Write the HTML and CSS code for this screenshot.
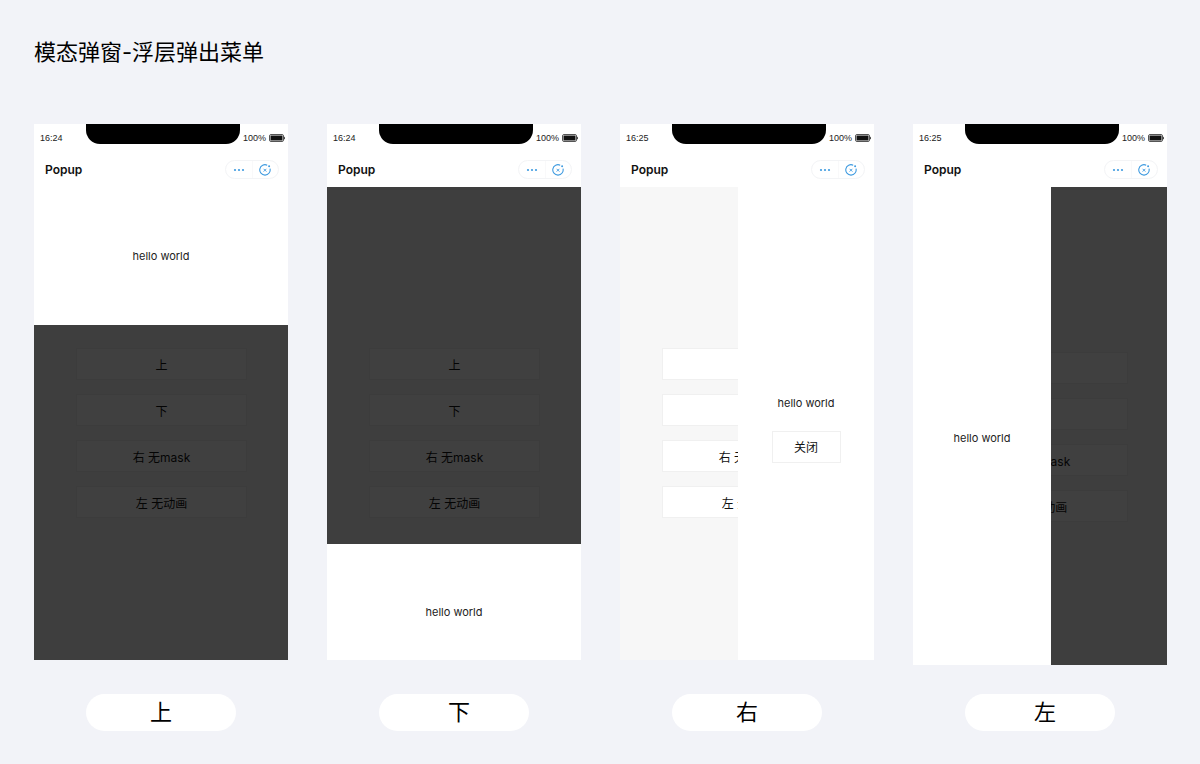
FILE: index.html
```
<!DOCTYPE html>
<html lang="zh-CN">
<head>
    <meta charset="UTF-8">
    <meta name="viewport" content="width=device-width, initial-scale=1.0">
    <title>模态弹窗-浮层弹出菜单</title>
    <link rel="stylesheet" href="styles.css">
</head>
<body>
    <!-- Shared icons -->
    <svg class="sprite" aria-hidden="true">
        <symbol id="battery" viewBox="0 0 16 8">
            <rect x="0.5" y="0.5" width="14" height="7" rx="1.5" fill="none" stroke="#555"/>
            <rect x="1.5" y="1.5" width="12" height="5" rx="0.5" fill="#111"/>
            <path d="M15 2.5 Q16 3 16 4 Q16 5 15 5.5 Z" fill="#333"/>
        </symbol>
        <symbol id="more" viewBox="0 0 12 12">
            <circle cx="2" cy="6" r="1.1" fill="#3f9be0"/>
            <circle cx="6" cy="6" r="1.1" fill="#3f9be0"/>
            <circle cx="10" cy="6" r="1.1" fill="#3f9be0"/>
        </symbol>
        <symbol id="close" viewBox="0 0 12 12">
            <path d="M8.2 1.2 A5.2 5.2 0 1 0 11 4.6" fill="none" stroke="#3f9be0" stroke-width="1.1"/>
            <circle cx="10.1" cy="2.2" r="1" fill="#3f9be0"/>
            <path d="M4.6 4.8 L7.4 7.6 M7.4 4.8 L4.6 7.6" stroke="#3f9be0" stroke-width="0.9"/>
        </symbol>
    </svg>

    <main class="page">
        <h1>模态弹窗-浮层弹出菜单</h1>

        <div class="screens">
            <!-- Top -->
            <figure class="screen">
                <div class="phone">
                    <div class="status">
                        <span class="time">16:24</span>
                        <span class="notch"></span>
                        <span class="power">100% <svg class="battery"><use href="#battery"/></svg></span>
                    </div>
                    <header class="nav">
                        <h2>Popup</h2>
                        <div class="capsule">
                            <button type="button" aria-label="More"><svg><use href="#more"/></svg></button>
                            <button type="button" aria-label="Close"><svg><use href="#close"/></svg></button>
                        </div>
                    </header>
                    <div class="stage">
                        <button type="button" class="item">上</button>
                        <button type="button" class="item">下</button>
                        <button type="button" class="item">右 无mask</button>
                        <button type="button" class="item">左 无动画</button>
                        <div class="mask"></div>
                        <div class="popup popup-top"><p>hello world</p></div>
                    </div>
                </div>
                <figcaption>上</figcaption>
            </figure>

            <!-- Bottom -->
            <figure class="screen">
                <div class="phone">
                    <div class="status">
                        <span class="time">16:24</span>
                        <span class="notch"></span>
                        <span class="power">100% <svg class="battery"><use href="#battery"/></svg></span>
                    </div>
                    <header class="nav">
                        <h2>Popup</h2>
                        <div class="capsule">
                            <button type="button" aria-label="More"><svg><use href="#more"/></svg></button>
                            <button type="button" aria-label="Close"><svg><use href="#close"/></svg></button>
                        </div>
                    </header>
                    <div class="stage">
                        <button type="button" class="item">上</button>
                        <button type="button" class="item">下</button>
                        <button type="button" class="item">右 无mask</button>
                        <button type="button" class="item">左 无动画</button>
                        <div class="mask"></div>
                        <div class="popup popup-bottom"><p>hello world</p></div>
                    </div>
                </div>
                <figcaption class="indent">下</figcaption>
            </figure>

            <!-- Right, no mask -->
            <figure class="screen">
                <div class="phone">
                    <div class="status">
                        <span class="time">16:25</span>
                        <span class="notch"></span>
                        <span class="power">100% <svg class="battery"><use href="#battery"/></svg></span>
                    </div>
                    <header class="nav">
                        <h2>Popup</h2>
                        <div class="capsule">
                            <button type="button" aria-label="More"><svg><use href="#more"/></svg></button>
                            <button type="button" aria-label="Close"><svg><use href="#close"/></svg></button>
                        </div>
                    </header>
                    <div class="stage">
                        <button type="button" class="item">上</button>
                        <button type="button" class="item">下</button>
                        <button type="button" class="item">右 无mask</button>
                        <button type="button" class="item">左 无动画</button>
                        <div class="popup popup-right">
                            <p>hello world</p>
                            <button type="button" class="item dismiss">关闭</button>
                        </div>
                    </div>
                </div>
                <figcaption>右</figcaption>
            </figure>

            <!-- Left, no animation -->
            <figure class="screen">
                <div class="phone phone-tall">
                    <div class="status">
                        <span class="time">16:25</span>
                        <span class="notch"></span>
                        <span class="power">100% <svg class="battery"><use href="#battery"/></svg></span>
                    </div>
                    <header class="nav">
                        <h2>Popup</h2>
                        <div class="capsule">
                            <button type="button" aria-label="More"><svg><use href="#more"/></svg></button>
                            <button type="button" aria-label="Close"><svg><use href="#close"/></svg></button>
                        </div>
                    </header>
                    <div class="stage">
                        <button type="button" class="item">上</button>
                        <button type="button" class="item">下</button>
                        <button type="button" class="item">右 无mask</button>
                        <button type="button" class="item">左 无动画</button>
                        <div class="mask"></div>
                        <div class="popup popup-left"><p>hello world</p></div>
                    </div>
                </div>
                <figcaption class="indent">左</figcaption>
            </figure>
        </div>
    </main>
</body>
</html>
```
FILE: styles.css
```
* {
    box-sizing: border-box;
}
body {
    margin: 0;
    background-color: #f2f3f8;
    color: #000;
    font-family: Inter, "Noto Sans CJK SC", sans-serif;
}
button {
    margin: 0;
    padding: 0;
    border: none;
    background: none;
    font-family: inherit;
    cursor: pointer;
}
.sprite {
    display: none;
}
.page {
    padding: 36px 33px 33px 34px;
}
h1 {
    margin: 0 0 56px;
    font-size: 22px;
    font-weight: 400;
    line-height: 32px;
}
.screens {
    display: grid;
    grid-template-columns: repeat(4, 1fr);
    column-gap: 39px;
}
.screen {
    display: flex;
    flex-direction: column;
    justify-content: space-between;
    align-items: center;
    gap: 29px;
    margin: 0;
}
.phone {
    width: 100%;
    background: #fff;
}

/* Status bar */
.status {
    display: flex;
    height: 28px;
    font-family: "Liberation Sans", Arial, sans-serif;
    font-size: 9px;
    line-height: 28px;
    color: #222;
}
.time, .power {
    flex: 1;
}
.time {
    padding-left: 6px;
}
.notch {
    width: 154px;
    height: 20px;
    border-radius: 0 0 14px 14px;
    background: #000;
}
.power {
    display: flex;
    justify-content: flex-end;
    align-items: center;
    gap: 3px;
    padding-right: 3px;
}
.battery {
    width: 16px;
    height: 8px;
}

/* Title bar */
.nav {
    display: flex;
    justify-content: space-between;
    align-items: center;
    height: 35px;
    padding: 0 9px 0 11px;
}
h2 {
    margin: 0;
    font-size: 12px;
    font-weight: 600;
    color: #111;
}
.capsule {
    display: flex;
    width: 54px;
    height: 19px;
    border: 1px solid #f3f4f6;
    border-radius: 10px;
}
.capsule button {
    display: flex;
    flex: 1;
    justify-content: center;
    align-items: center;
}
.capsule button + button {
    border-left: 1px solid #f9f9fa;
}
.capsule svg {
    width: 12px;
    height: 12px;
}

/* Demo area under the title bar */
.stage {
    position: relative;
    display: flex;
    flex-direction: column;
    gap: 14px;
    padding: 161px 41px 142px 42px;
    background: #f7f7f7;
    overflow: hidden;
}
.phone-tall .stage {
    padding: 165px 39px 143px 42px;
}
.item {
    height: 32px;
    border: 1px solid #f0f0f0;
    background: #fff;
    font-size: 12px;
    color: #111;
}
.mask {
    position: absolute;
    inset: 0;
    background: rgba(0, 0, 0, 0.75);
}
.popup {
    position: absolute;
    display: flex;
    flex-direction: column;
    justify-content: center;
    align-items: center;
    background: #fff;
    font-size: 11px;
    line-height: 16px;
    color: #222;
}
.popup p {
    margin: 0;
}
.popup-top {
    top: 0;
    left: 0;
    right: 0;
    height: 138px;
}
.popup-bottom {
    bottom: 0;
    left: 0;
    right: 0;
    height: 116px;
    padding-top: 20px;
}
.popup-right {
    top: 0;
    bottom: 0;
    right: 0;
    width: 136px;
    gap: 20px;
    padding-top: 10px;
}
.popup-left {
    top: 0;
    bottom: 0;
    left: 0;
    width: 138px;
    padding-top: 24px;
}
.dismiss {
    width: 69px;
}

figcaption {
    width: 150px;
    border-radius: 19px;
    background: #fff;
    font-size: 22px;
    line-height: 37px;
    text-align: center;
}
.indent {
    padding-left: 10px;
}
```
